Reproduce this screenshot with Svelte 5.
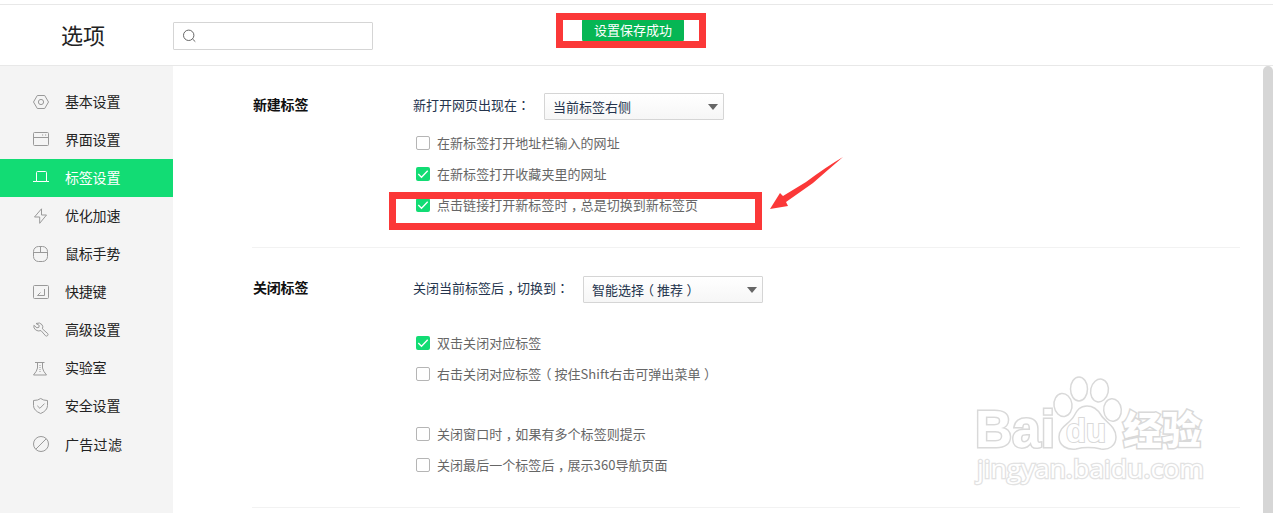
<script lang="ts">
	const menu = [
		{ name: '基本设置', icon: 'basic' },
		{ name: '界面设置', icon: 'window' },
		{ name: '标签设置', icon: 'tab' },
		{ name: '优化加速', icon: 'flash' },
		{ name: '鼠标手势', icon: 'mouse' },
		{ name: '快捷键', icon: 'key' },
		{ name: '高级设置', icon: 'wrench' },
		{ name: '实验室', icon: 'lab' },
		{ name: '安全设置', icon: 'shield' },
		{ name: '广告过滤', icon: 'block' }
	]

	const sections = [
		{
			title: '新建标签',
			label: '新打开网页出现在',
			value: '当前标签右侧',
			groups: [
				[
					{ text: '在新标签打开地址栏输入的网址', checked: false },
					{ text: '在新标签打开收藏夹里的网址', checked: true },
					{ text: '点击链接打开新标签时，总是切换到新标签页', checked: true }
				]
			]
		},
		{
			title: '关闭标签',
			label: '关闭当前标签后，切换到',
			value: '智能选择（推荐）',
			groups: [
				[
					{ text: '双击关闭对应标签', checked: true },
					{ text: '右击关闭对应标签（按住Shift右击可弹出菜单）', checked: false }
				],
				[
					{ text: '关闭窗口时，如果有多个标签则提示', checked: false },
					{ text: '关闭最后一个标签后，展示360导航页面', checked: false }
				]
			]
		}
	]

	let active = $state('tab')
</script>

<!-- full-width punctuation sits in the middle of its cell -->
{#snippet spaced(text: string)}
	{#each text.split(/([，（）])/) as part}{#if '，（）'.includes(part) && part}<span class="punct">{part}</span>{:else}{part}{/if}{/each}
{/snippet}

<div class="page">
	<header>
		<h1>选项</h1>
		<div class="search">
			<svg width="16" height="16" viewBox="0 0 16 16">
				<circle cx="6.7" cy="7.3" r="5.2" />
				<path d="M10.5 11l2.8 2.7" />
			</svg>
		</div>
	</header>

	<div class="body">
		<nav>
			{#each menu as item}
				<button class:active={active === item.icon} onclick={() => (active = item.icon)}>
					<svg width="18" height="18" viewBox="0 0 18 18">
						{#if item.icon === 'basic'}
							<path d="M5.3 2.5h7.4l3.8 6.5-3.8 6.5H5.3L1.5 9z" />
							<circle cx="9" cy="9" r="2.6" />
						{:else if item.icon === 'window'}
							<rect x="1.5" y="1.5" width="15" height="13" rx="1" />
							<path d="M1.5 6.500h15M10 4h1.200M13 4h1.200" />
						{:else if item.icon === 'tab'}
							<path d="M1 12.5h3.5v-9q0-1 1-1h8q1 0 1 1v9h2.5M4.5 12.5h10" />
						{:else if item.icon === 'flash'}
							<path d="M9.5 1.8L2.5 10h5.2v6.3L14.5 8H9.5z" />
						{:else if item.icon === 'mouse'}
							<rect x="1.5" y="1.5" width="14" height="15" rx="5" />
							<path d="M1.5 7.5h14M8.5 1.5v6" />
						{:else if item.icon === 'key'}
							<rect x="1.5" y="2.500" width="15" height="13" rx="1" />
							<path d="M12.500 6v6.500h-7M8.500 9.500l-3 3" />
						{:else if item.icon === 'wrench'}
							<path
								d="M4 2.5q4-1.6 6 1.2 1.5 2 .4 4.1l5.4 4.9q.6 1-.2 1.9-1 .9-2 .2L9 9.6q-3 1.100-5.400-.7Q1.200 7 1.900 4.300l3 2.500 2-.5.3-1.900z"
							/>
						{:else if item.icon === 'lab'}
							<path d="M3 3.500h9.500M5.500 3.500v5.500q-.5 3-4 7h13q-3.500-4-4-7V3.500" />
							<path class="dots" d="M8 6v7" />
						{:else if item.icon === 'shield'}
							<path d="M8.7 1.5q2.6 2 6.8 2v5q0 5-6.8 8-7.2-3-7.2-8v-5q4.6 0 7.2-2z" />
							<path d="M5.3 8.8l2.6 2.5 4.6-4.7" />
						{:else}
							<circle cx="9" cy="9" r="7.5" />
							<path d="M3.8 14.2L14.2 3.8" />
						{/if}
					</svg>
					<span>{item.name}</span>
				</button>
			{/each}
		</nav>

		<main>
			{#each sections as section}
				<section>
					<h2>{section.title}</h2>
					<div class="options">
						<div class="choice">
							<span>{@render spaced(section.label)}<span class="colon">：</span></span>
							<div class="select">
								<span>{@render spaced(section.value)}</span>
								<svg width="10" height="6" viewBox="0 0 10 6"><path d="M0 0h10L5 6z" /></svg>
							</div>
						</div>
						{#each section.groups as group}
							<div class="group">
								{#each group as option}
									<div class="option">
										<span class="box" class:checked={option.checked}>
											{#if option.checked}
												<svg width="14" height="14" viewBox="0 0 14 14"><path d="M2.3 7l3.2 3.3 6.2-6.5" /></svg>
											{/if}
										</span>
										<span>{@render spaced(option.text)}</span>
									</div>
								{/each}
							</div>
						{/each}
					</div>
				</section>
			{/each}
		</main>
		<div class="scrollbar"></div>
	</div>

	<div class="toast">设置保存成功</div>
	<div class="mark mark-toast"></div>
	<div class="mark mark-option"></div>
	<svg class="arrow" width="76" height="54" viewBox="0 0 76 54">
		<path d="M73 0Q56 10 36 25L13 39 10 36 0 52l18-3-2-4L43 26Q59 12 73 0z" />
	</svg>

	<svg class="watermark" width="240" height="120" viewBox="0 0 240 120">
		<g class="logo">
			<text class="latin" x="5" y="87" textLength="80" lengthAdjust="spacingAndGlyphs">Bai</text>
			<ellipse cx="93" cy="45" rx="9" ry="11.5" transform="rotate(-8 93 45)" />
			<ellipse cx="109" cy="29" rx="8.5" ry="12" />
			<ellipse cx="129.5" cy="30.5" rx="8.8" ry="11.5" transform="rotate(12 129.5 30.5)" />
			<ellipse cx="142.5" cy="50" rx="8.8" ry="11.2" transform="rotate(-5 142.5 50)" />
			<path
				d="M117 46c7 0 11 4 14 9 4 7 15 11 15 22 0 9-7 13-15 12-9-2-17-2-25 0-9 1-17-3-17-12 0-11 11-13 15-21 3-6 6-10 13-10z"
			/>
			<text class="du" x="96" y="82" textLength="40" lengthAdjust="spacingAndGlyphs">du</text>
			<text class="han" x="153" y="84">经验</text>
		</g>
		<text class="url" x="7" y="118" textLength="227" lengthAdjust="spacingAndGlyphs">jingyan.baidu.com</text>
	</svg>
</div>

<style>
	:global(body) {
		margin: 0;
		overflow: hidden;
		background: #fff;
	}

	.page {
		position: relative;
		display: flex;
		flex-direction: column;
		box-sizing: border-box;
		width: 1273px;
		height: 513px;
		padding-top: 4px;
		overflow: hidden;
		color: #24344d;
		font: 13px/20px 'Noto Sans CJK SC', sans-serif;
	}

	header {
		display: flex;
		align-items: flex-start;
		box-sizing: border-box;
		flex: none;
		height: 62px;
		border: solid #e8e8e8;
		border-width: 1px 0;
	}

	h1 {
		box-sizing: border-box;
		width: 173px;
		margin: 0;
		padding: 13px 0 0 61px;
		color: #222;
		font-size: 22px;
		font-weight: 400;
		line-height: 32px;
	}

	.search {
		box-sizing: border-box;
		width: 200px;
		height: 28px;
		margin-top: 17px;
		padding: 5px 8px;
		border: 1px solid #d5d5d5;
		border-radius: 1px;
	}

	svg {
		display: block;
		flex: none;
		fill: none;
		stroke: #999;
	}

	.search svg {
		stroke: #666;
	}

	.body {
		display: flex;
		flex: 1;
		min-height: 0;
	}

	nav {
		flex: none;
		box-sizing: border-box;
		width: 173px;
		padding-top: 17px;
		background: #f4f4f4;
	}

	button {
		display: flex;
		align-items: center;
		gap: 15px;
		width: 100%;
		height: 38px;
		padding: 0 0 0 32px;
		border: 0;
		background: none;
		color: #222;
		font: inherit;
		font-size: 14px;
		letter-spacing: -0.2px;
	}

	button span {
		padding-bottom: 2px;
	}

	button:last-child span {
		padding-bottom: 0;
		letter-spacing: 0.3px;
	}

	button.active {
		background: #12dc74;
		color: #fff;
	}

	.active svg {
		stroke: #fff;
	}

	.dots {
		stroke-dasharray: 1 1;
	}

	main {
		flex: 1;
		min-width: 0;
		padding: 0 23px 0 79px;
	}

	section {
		display: flex;
		box-sizing: border-box;
		height: 182px;
		padding-top: 27px;
		border-bottom: 1px solid #f2f2f2;
	}

	section + section {
		height: 260px;
		padding-top: 28px;
	}

	h2 {
		width: 160px;
		margin: 1px 0 0 1px;
		color: #111;
		font-size: 14px;
		font-weight: 700;
		line-height: 20px;
		letter-spacing: -0.2px;
	}

	.choice {
		display: flex;
		gap: 14px;
		height: 27px;
		line-height: 24px;
	}

	.colon {
		font-family: 'Noto Sans CJK TC', sans-serif;
	}

	.punct {
		padding: 0 3px 0 3.5px;
		font-feature-settings: 'halt';
	}

	.select {
		display: flex;
		align-items: center;
		justify-content: space-between;
		box-sizing: border-box;
		width: 180px;
		height: 27px;
		padding: 0 5px 0 8px;
		border: 1px solid #d5d5d5;
		border-radius: 1px;
		background: linear-gradient(#fff, #f6f6f6);
	}

	.select svg {
		fill: #666;
		stroke: none;
	}

	.group {
		padding: 7px 0 0 3px;
	}

	section + section .group {
		padding-top: 24px;
	}

	section + section .group + .group {
		padding-top: 29px;
	}

	.option {
		display: flex;
		align-items: center;
		gap: 7px;
		height: 31px;
		color: #666;
		letter-spacing: 0.05px;
	}

	.box {
		box-sizing: border-box;
		width: 14px;
		height: 14px;
		border: 1px solid #b5b5b5;
		border-radius: 2px;
	}

	.box.checked {
		border: 0;
		background: #12dc74;
	}

	.box svg {
		stroke: #fff;
		stroke-width: 1.3;
	}

	.scrollbar {
		width: 10px;
		border-radius: 5px 5px 0 0;
		background: #d6d6d6;
	}

	.toast {
		position: absolute;
		left: 582px;
		top: 18px;
		width: 102px;
		height: 24px;
		border-radius: 3px;
		background: #06b654;
		color: #fff;
		line-height: 23px;
		text-align: center;
	}

	.mark {
		position: absolute;
		box-sizing: border-box;
		border: 7px solid #fb3838;
	}

	.mark-toast {
		left: 556px;
		top: 13px;
		width: 150px;
		height: 35px;
	}

	.mark-option {
		left: 389px;
		top: 192px;
		width: 373px;
		height: 38px;
	}

	.arrow {
		position: absolute;
		left: 770px;
		top: 157px;
		fill: #fb3838;
		stroke: none;
	}

	.watermark {
		position: absolute;
		left: 970px;
		top: 360px;
		overflow: visible;
		fill: #fff;
		stroke: #d9d9d9;
	}

	.logo {
		stroke-width: 1.5;
	}

	.watermark text {
		paint-order: stroke;
		stroke-width: 3px;
	}

	.latin,
	.du {
		font: 700 51px 'Liberation Sans', sans-serif;
	}

	.watermark .du {
		font-size: 33px;
		stroke-width: 2px;
	}

	.han {
		font: 900 39px 'Noto Sans CJK SC', sans-serif;
	}

	.watermark .url {
		font: 400 25px 'Open Sans', sans-serif;
		stroke: #e2e2e2;
		stroke-width: 2.5px;
	}
</style>
